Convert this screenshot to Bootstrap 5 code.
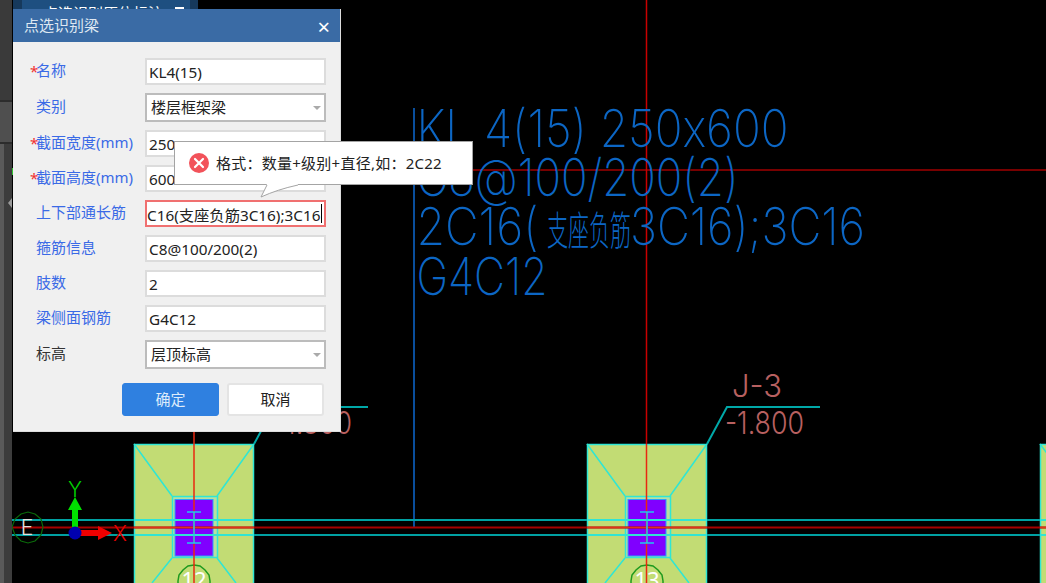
<!DOCTYPE html>
<html lang="zh-CN">
<head>
  <meta charset="UTF-8" />
  <meta name="viewport" content="width=device-width, initial-scale=1" />
  <title>点选识别梁</title>
  <link href="https://cdn.jsdelivr.net/npm/bootstrap@5.3.0/dist/css/bootstrap.min.css" rel="stylesheet" />
  <style>
    html, body { height: 100%; }
    body {
      width: 1046px; height: 583px; overflow: hidden; background: #000;
      font-family: "Noto Sans", "Noto Sans CJK SC", sans-serif; font-size: 15px;
    }
    .side-strip { width: 12px; background: #3b3b3b; }
    .strip-top { height: 100px; background: #3a3a3a; }
    .strip-mid { height: 44px; background: #4f4f4f; border-top: 2px solid #2c2c2c; border-bottom: 2px solid #2c2c2c; }
    .strip-low { flex: 1; background: #3c3c3c; border-left: 4px solid #5a5a5a; }
    .strip-tick { left: 12px; top: 168px; width: 1px; height: 7px; background: #30c030; }
    .strip-arrow { left: 8px; top: 198px; border: 5px solid transparent; border-left: 0; border-right: 4px solid #9a9a9a; }
    .cad-canvas { left: 0; top: 0; }
    .cad-blue { font-family: "Inter", "Lato", "Noto Sans CJK SC", sans-serif; font-weight: 200; font-size: 52px; fill: #0c66c4; font-feature-settings: "calt" 0; }
    .cad-cjk { font-family: "Noto Sans CJK SC", sans-serif; font-weight: 200; font-size: 40px; fill: #0c66c4; }
    .cad-red { font-family: "Inter", "Lato", sans-serif; font-weight: 300; font-size: 31px; fill: #b86060; }
    .axis-num { font-family: "Noto Sans", sans-serif; font-size: 22px; fill: #fff; text-anchor: middle; }
    .axis-e { font-family: "Inter", sans-serif; font-weight: 300; font-size: 21px; fill: #e0e0e0; text-anchor: middle; }
    .ucs-letter { font-family: "Inter", sans-serif; font-weight: 300; font-size: 21px; }
    .back-panel { left: 13px; top: 0; width: 185px; height: 9px; background: #1e4f80; border-left: 9px solid #16395c; border-right: 8px solid #16395c; overflow: hidden; }
    .back-panel span { position: absolute; top: 2px; left: 21px; color: #fff; font-size: 15px; line-height: 22px; white-space: nowrap; }
    .back-panel i { position: absolute; top: 7px; right: 6px; width: 9px; height: 2px; background: #fff; }
    .pick-dialog { left: 13px; top: 9px; width: 328px; height: 423px; background: #f0f0f0; --bs-card-border-width: 0; border-right: 1px solid #ddd; border-bottom: 1px solid #ddd; }
    .pick-head { height: 33px; padding: 0 10px 0 11px; background: #3a6ba5; color: #dfe8f2; border: 0; }
    .pick-close { font-size: 22px; line-height: 1; color: #fff; }
    .pick-body { padding: 16px 14px 0 17px; }
    .pick-row { height: 27px; }
    .pick-row.is-select { height: 29px; position: relative; }
    .pick-row.is-select::after {
      content: ""; position: absolute; right: 5px; top: 13px;
      border: 4px solid transparent; border-top: 4px solid #aaa; border-bottom: 0;
    }
    .pick-label { width: 115px; flex-shrink: 0; color: #3a6ae6; white-space: nowrap; padding-left: 6px; position: relative; line-height: 1; margin-top: -3px; }
    .pick-label.plain { color: #333; }
    .pick-label b { position: absolute; left: 0; top: 1px; color: #f03030; font-weight: 400; }
    .pick-input, .pick-select {
      width: 181px; height: 100%; padding: 0 2px; border: 2px solid #dcdcdc; border-radius: 0;
      font-size: 15.3px; color: #222; background-color: #fff; box-shadow: none; flex-shrink: 0;
    }
    .pick-select { border-color: #bcbcbc; padding-left: 4px; font-size: 15px; background-image: none; }
    .pick-input.is-bad { border-color: #f07070; padding-left: 0; }
    .pick-caret { right: 4px; top: 4px; width: 1px; height: 19px; background: #000; }
    .pick-btn { width: 97px; height: 33px; padding: 0; font-size: 15px; border-radius: 3px; }
    .btn-ok { background: #2f80e0; border-color: #2f80e0; color: #dcebfb; }
    .btn-no { background: #fff; border: 2px solid #e4e4e4; color: #222; }
    .pick-actions { margin-top: 6px; padding-left: 92px; gap: 8px; }
    .err-tip { left: 174px; top: 141px; width: 299px; height: 44px; background: #fff; border: 1px solid #a4a4a4; font-size: 15px; letter-spacing: .25px; color: #222; padding-left: 14px; gap: 7px; }
    .err-tail { left: 258px; top: 183px; }
    .err-icon { width: 20px; height: 20px; }
  </style>
</head>
<body class="position-relative">
  <!-- modello CAD -->
  <svg class="cad-canvas position-absolute" width="1046" height="583" viewBox="0 0 1046 583">
    <line x1="414" y1="108" x2="414" y2="527" stroke="#0d68d0" stroke-width="1.5" />
    <line x1="341" y1="170" x2="1046" y2="170" stroke="#a00000" stroke-width="1.5" />

    <g id="footing">
      <rect x="134.5" y="444.5" width="119" height="150" fill="#c2dc74" stroke="#2fe6d4" stroke-width="1.5" />
      <path d="M134 444 172 496M254 444 217 496M172 558 152 583M217 558 236 583" stroke="#2fe6d4" stroke-width="1.5" fill="none" />
      <rect x="172.5" y="496.5" width="45" height="61" fill="#b8e0a0" stroke="#2fe6d4" stroke-width="1.5" />
      <rect x="175" y="499.5" width="38" height="56.5" fill="#8000ff" stroke="#26a0ff" stroke-width="1" />
      <path d="M194 565l6 1 5 4 4 5 1 6v10h-32v-10l1-6 4-5 5-4z" fill="#c2dc74" stroke="#1e9a1e" stroke-width="1.5" />
    </g>
    <use href="#footing" x="453" />
    <rect x="1040.5" y="444.5" width="20" height="150" fill="#c2dc74" stroke="#2fe6d4" stroke-width="1.5" />
    <path d="M1040 444 1052 460" stroke="#2fe6d4" stroke-width="1.5" />

    <!-- assi -->
    <g fill="none">
      <line x1="12" y1="520" x2="1046" y2="520" stroke="#00a0a2" stroke-width="2" />
      <line x1="12" y1="535" x2="1046" y2="535" stroke="#00a0a2" stroke-width="2" />
      <line x1="12" y1="527.5" x2="1046" y2="527.5" stroke="#a80000" stroke-width="2" />
      <line x1="194" y1="432" x2="194" y2="583" stroke="#e82810" stroke-width="1.5" />
      <line x1="646.5" y1="0" x2="646.5" y2="444" stroke="#c80000" stroke-width="1.5" />
      <line x1="646.5" y1="444" x2="646.5" y2="583" stroke="#e82810" stroke-width="1.5" />
      <path d="M134 520H254M134 535H254M587 520H707M587 535H707M1040 520H1046M1040 535H1046" stroke="#30e4d4" stroke-width="2" />
      <path d="M134 527.5H254M587 527.5H707M1040 527.5H1046" stroke="#e03418" stroke-width="1.5" />
      <path d="M187 512H201M187 543H201M194 512V543M640 512H654M640 543H654M647 512V543" stroke="#22c8ea" stroke-width="1.5" />
      <path d="M12 527l3-8 6-5 7-2 7 2 6 5 2 8-2 8-6 6-7 2-7-2-6-6z" stroke="#0a6a0a" stroke-width="1.2" />
    </g>
    <text class="axis-num" x="194" y="588">12</text>
    <text class="axis-num" x="647" y="588">13</text>
    <text class="axis-e" x="27" y="535">E</text>

    <!-- ucs -->
    <rect x="72" y="508" width="6" height="25" fill="#00e000" />
    <path d="M75 497 82 510H68z" fill="#00e000" />
    <rect x="75" y="530" width="25" height="6" fill="#f00000" />
    <path d="M112 533 98 526V540z" fill="#f00000" />
    <circle cx="75" cy="533" r="6.5" fill="#0000b0" />
    <text class="ucs-letter" x="68" y="497" fill="#00d000">Y</text>
    <text class="ucs-letter" x="113" y="541" fill="#e80000">X</text>

    <!-- testo trave -->
    <text class="cad-blue" x="416.5" y="147" textLength="372" lengthAdjust="spacingAndGlyphs">KL 4(15) 250x600</text>
    <text class="cad-blue" x="416.5" y="196" textLength="322" lengthAdjust="spacingAndGlyphs">C8@100/200(2)</text>
    <text class="cad-blue" x="416.5" y="245" textLength="122" lengthAdjust="spacingAndGlyphs">2C16(</text>
    <text class="cad-cjk" x="547" y="245" textLength="84" lengthAdjust="spacingAndGlyphs">支座负筋</text>
    <text class="cad-blue" x="630" y="245" textLength="235" lengthAdjust="spacingAndGlyphs">3C16);3C16</text>
    <text class="cad-blue" x="416.5" y="295" textLength="131" lengthAdjust="spacingAndGlyphs">G4C12</text>

    <!-- quote -->
    <path d="M707 444 727 407H820" stroke="#00a8a8" stroke-width="2" fill="none" />
    <path d="M254 444 274 407H368" stroke="#00a8a8" stroke-width="2" fill="none" />
    <text class="cad-red" x="732" y="397" textLength="50" lengthAdjust="spacingAndGlyphs">J-3</text>
    <text class="cad-red" x="725" y="434" textLength="79" lengthAdjust="spacingAndGlyphs">-1.800</text>
    <text class="cad-red" x="273" y="434" textLength="79" lengthAdjust="spacingAndGlyphs">-1.800</text>
  </svg>

  <!-- barra laterale -->
  <div class="side-strip position-absolute top-0 start-0 h-100 d-flex flex-column">
    <div class="strip-top"></div>
    <div class="strip-mid"></div>
    <div class="strip-low"></div>
  </div>
  <div class="strip-tick position-absolute"></div>
  <div class="strip-arrow position-absolute"></div>

  <div class="back-panel position-absolute"><span>点选识别原位标注</span><i></i></div>

  <!-- finestra -->
  <div class="card pick-dialog position-absolute rounded-0">
    <div class="card-header pick-head rounded-0 d-flex align-items-center justify-content-between">
      <span>点选识别梁</span>
      <span class="pick-close">×</span>
    </div>
    <form class="pick-body d-flex flex-column gap-2">
      <div class="pick-row d-flex align-items-center">
        <label class="pick-label"><b>*</b>名称</label>
        <input class="form-control pick-input" type="text" value="KL4(15)" />
      </div>
      <div class="pick-row is-select d-flex align-items-center">
        <label class="pick-label">类别</label>
        <select class="form-select pick-select"><option>楼层框架梁</option></select>
      </div>
      <div class="pick-row d-flex align-items-center">
        <label class="pick-label"><b>*</b>截面宽度(mm)</label>
        <input class="form-control pick-input" type="text" value="250" />
      </div>
      <div class="pick-row d-flex align-items-center">
        <label class="pick-label"><b>*</b>截面高度(mm)</label>
        <input class="form-control pick-input" type="text" value="600" />
      </div>
      <div class="pick-row d-flex align-items-center">
        <label class="pick-label">上下部通长筋</label>
        <div class="position-relative h-100">
          <input class="form-control pick-input is-bad" type="text" value="C16(支座负筋3C16);3C16" />
          <span class="pick-caret position-absolute"></span>
        </div>
      </div>
      <div class="pick-row d-flex align-items-center">
        <label class="pick-label">箍筋信息</label>
        <input class="form-control pick-input" type="text" value="C8@100/200(2)" />
      </div>
      <div class="pick-row d-flex align-items-center">
        <label class="pick-label">肢数</label>
        <input class="form-control pick-input" type="text" value="2" />
      </div>
      <div class="pick-row d-flex align-items-center">
        <label class="pick-label">梁侧面钢筋</label>
        <input class="form-control pick-input" type="text" value="G4C12" />
      </div>
      <div class="pick-row is-select d-flex align-items-center">
        <label class="pick-label plain">标高</label>
        <select class="form-select pick-select"><option>层顶标高</option></select>
      </div>
      <div class="pick-actions d-flex">
        <button type="button" class="btn btn-primary pick-btn btn-ok">确定</button>
        <button type="button" class="btn btn-light pick-btn btn-no">取消</button>
      </div>
    </form>
  </div>

  <!-- messaggio errore -->
  <div class="err-tip position-absolute d-flex align-items-center">
    <svg class="err-icon" viewBox="0 0 20 20">
      <circle cx="10" cy="10" r="10" fill="#f2525a" />
      <path d="M6 6 14 14M14 6 6 14" stroke="#fff" stroke-width="2.2" stroke-linecap="round" />
    </svg>
    <span>格式：数量+级别+直径,如：2C22</span>
  </div>
  <svg class="err-tail position-absolute" width="44" height="16" viewBox="0 0 44 16">
    <path d="M9 1 3 14C14 9 26 5 40 2L40 1z" fill="#fff" />
    <path d="M9 2 3 14C14 9 26 5 40 2" fill="none" stroke="#a4a4a4" stroke-width="1" />
  </svg>

  <script src="https://cdn.jsdelivr.net/npm/bootstrap@5.3.0/dist/js/bootstrap.bundle.min.js"></script>
</body>
</html>
